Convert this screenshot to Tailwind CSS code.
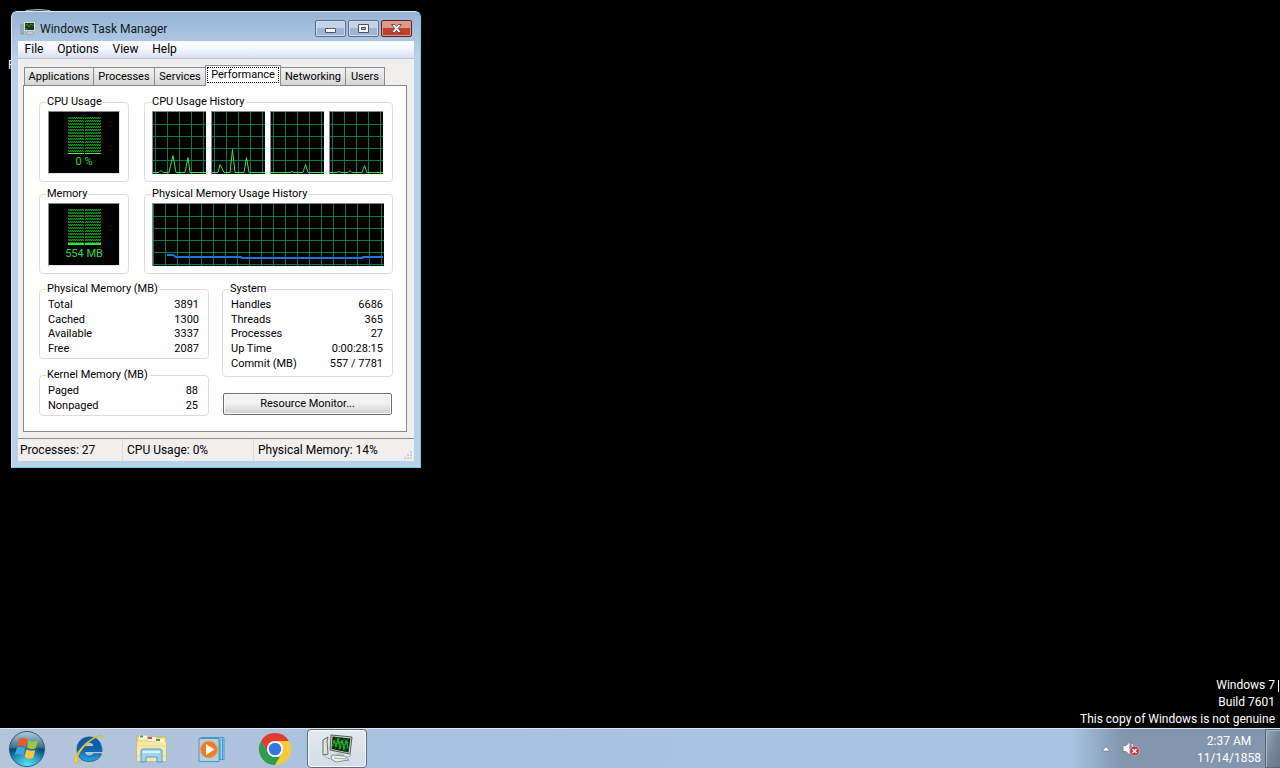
<!DOCTYPE html>
<html lang="en">
<head>
<meta charset="utf-8">
<meta name="viewport" content="width=device-width, initial-scale=1">
<title>Windows Task Manager</title>
<script src="https://cdn.jsdelivr.net/npm/@tailwindcss/browser@4"></script>
</head>
<body class="relative flex min-h-screen flex-col overflow-hidden bg-black font-[Roboto,sans-serif] text-xs text-black">

<main class="relative flex grow flex-col items-start">
  <!-- Desktop icon, mostly covered by the window -->
  <button aria-label="Recycle Bin" class="absolute top-[9px] left-[8px] flex flex-col items-start text-xs leading-4 text-white">
    <svg class="ml-[14px] h-12 w-8" viewBox="0 0 32 48" fill="none"><path d="M4 1.500Q16 -.5 28 1.500L25 44H8Z" fill="#333" stroke="#bbb"/></svg>
    <span class="w-[3px] overflow-hidden">R</span>
  </button>

  <!-- Task Manager window -->
  <section class="relative mt-[11px] ml-[11px] flex w-[410px] flex-col rounded-t-md border border-[#6fd3e6] border-t-[#dce9f5] border-l-[#cfe6f3] bg-linear-to-b from-[#98b4d3] via-[#b9d1ea] via-10% to-[#b9d1ea] px-[6px] pb-[6px]">
    <header class="flex h-[29px] items-start">
      <svg class="mt-[9px] ml-[2px] h-4 w-4 shrink-0" viewBox="0 0 16 16" fill="none">
        <path d="M1 3v10M1 4h3M1 13h3M3 4v9" stroke="#8a948c"/>
        <path d="M4 1h11v9H4z" fill="#d7ddd2"/><path d="M5 2h9v7H5z" fill="#173c1b"/>
        <path d="M5 5l2-2 2 3 2-3 3 2M5 8h3" stroke="#3d8a3f"/>
        <path d="M7 11h6l1 2H6z" fill="#e9ece5" stroke="#7c857c" stroke-width=".6"/>
      </svg>
      <h1 class="ml-1 pt-[8px] leading-[18px] text-[#101820]">Windows Task Manager</h1>
      <div class="mt-[8px] mr-[2px] ml-auto flex gap-[2px]">
        <button aria-label="Minimize" class="flex h-[17px] w-[31px] items-center justify-center rounded-xs border border-[#58708e] bg-linear-to-b from-[#c3d3e7] from-50% to-[#9fb5d0] to-50% shadow-[inset_0_0_0_1px_#cfddee]">
          <svg class="h-[13px] w-[13px]" viewBox="0 0 13 13"><path d="M1.500 6.500h10v4h-10z" fill="#fff" stroke="#4a5468"/></svg>
        </button>
        <button aria-label="Maximize" class="flex h-[17px] w-[31px] items-center justify-center rounded-xs border border-[#58708e] bg-linear-to-b from-[#c3d3e7] from-50% to-[#9fb5d0] to-50% shadow-[inset_0_0_0_1px_#cfddee]">
          <svg class="h-[13px] w-[13px]" viewBox="0 0 13 13"><path d="M1.500 2.500h10v8h-10zM4.500 5.500v2h4v-2z" fill="#fff" fill-rule="evenodd" stroke="#4a5468"/></svg>
        </button>
        <button aria-label="Close" class="flex h-[17px] w-[31px] items-center justify-center rounded-xs border border-[#5b1f20] bg-linear-to-b from-[#dd9a8d] from-50% to-[#c0402c] to-50% shadow-[inset_0_0_0_1px_#e09a8e]">
          <svg class="h-[13px] w-[13px]" viewBox="0 0 13 13"><path d="M1.500 2.500h3l2 2 2-2h3l-3.300 4 3.300 4h-3l-2-2-2 2h-3l3.300-4z" fill="#fff" stroke="#55454f" stroke-width=".9"/></svg>
        </button>
      </div>
    </header>

    <div class="flex flex-col bg-[#f1efee]">
      <nav class="flex h-[18px] items-center border-b border-[#b8c4dc] bg-linear-to-b from-[#f8faff] from-35% to-[#dbe0f1] leading-[17px]">
        <button class="w-[32px]">File</button>
        <button class="w-[56px]">Options</button>
        <button class="w-[39px]">View</button>
        <button class="w-[39px]">Help</button>
      </nav>

      <div class="pt-[6px] pr-[7px] pl-[6px] text-[11px] leading-[14px]">
        <div role="tablist" class="flex items-end">
          <button role="tab" class="h-[18px] w-[70px] border border-b-0 border-[#8c8c8c] bg-linear-to-b from-[#f2f2f2] to-[#d6d6d6]">Applications</button>
          <button role="tab" class="h-[18px] w-[61px] border border-b-0 border-l-0 border-[#8c8c8c] bg-linear-to-b from-[#f2f2f2] to-[#d6d6d6]">Processes</button>
          <button role="tab" class="h-[18px] w-[50px] border-t border-[#8c8c8c] bg-linear-to-b from-[#f2f2f2] to-[#d6d6d6]">Services</button>
          <button role="tab" aria-selected="true" class="relative z-10 -mb-px flex h-[21px] w-[76px] flex-col border border-b-0 border-[#8c8c8c] bg-white px-px pt-px"><span class="w-full border border-dotted border-black leading-[14px]">Performance</span></button>
          <button role="tab" class="h-[18px] w-[65px] border border-b-0 border-l-0 border-[#8c8c8c] bg-linear-to-b from-[#f2f2f2] to-[#d6d6d6]">Networking</button>
          <button role="tab" class="h-[18px] w-[39px] border border-b-0 border-l-0 border-[#8c8c8c] bg-linear-to-b from-[#f2f2f2] to-[#d6d6d6]">Users</button>
        </div>

        <div role="tabpanel" class="-ml-px flex flex-col border border-[#8c8788] bg-white pt-[9px] pr-[13px] pb-[15px] pl-[15px]">
          <svg class="h-0 w-0" aria-hidden="true">
            <defs>
              <pattern id="dots" width="2" height="3" patternUnits="userSpaceOnUse"><path d="M0 .5h1M1 1.500h1" stroke="#189428"/><path d="M1 .5h1M0 1.500h1" stroke="#0a4d12"/></pattern>
            </defs>
          </svg>
          <div class="mb-[5px] flex gap-[15px]">
            <fieldset class="h-[87px] w-[90px] rounded-sm border border-[#dcdcdc] px-[8px] pt-[2px]">
              <legend class="-ml-[2px] px-px">CPU Usage</legend>
              <div class="flex h-[63px] flex-col items-center border border-[#8a8a8a] border-r-[#e6e6e6] border-b-[#e6e6e6] bg-black">
                <svg class="mt-[5px] h-[38px] w-[33px] shrink-0" viewBox="0 0 33 38"><path d="M0 0h16v36H0zM17 0h16v36H17z" fill="url(#dots)"/><path d="M0 36.500h16M17 36.500h16" stroke="#4bea4f"/></svg>
                <span class="leading-[14px] text-[#3fd24a]">0 %</span>
              </div>
            </fieldset>
            <fieldset class="h-[87px] grow rounded-sm border border-[#dcdcdc] px-[7px] pt-[2px]">
              <legend class="-ml-px px-px">CPU Usage History</legend>
              <div class="flex gap-[5px]">
                <svg class="h-[63px] w-[54px]" viewBox="0 0 54 63" fill="none"><path d="M0 0h54v63H0z" fill="#000"/><path d="M3.500 1v62M15.500 1v62M27.500 1v62M39.500 1v62M51.500 1v62M0 13.500h54M0 25.500h54M0 37.500h54M0 49.500h54" stroke="#0a7a4c"/><path d="M0 .5h54M.5 0v63" stroke="#8a8a8a"/><path d="M1 61.500h6l2-2 2 2h6l4-17 3 17h9l3-15 2 15h16" stroke="#36e04a"/></svg>
                <svg class="h-[63px] w-[54px]" viewBox="0 0 54 63" fill="none"><path d="M0 0h54v63H0z" fill="#000"/><path d="M3.500 1v62M15.500 1v62M27.500 1v62M39.500 1v62M51.500 1v62M0 13.500h54M0 25.500h54M0 37.500h54M0 49.500h54" stroke="#0a7a4c"/><path d="M0 .5h54M.5 0v63" stroke="#8a8a8a"/><path d="M1 61.500h6l2-8 4 8h6l2.500-23 2.500 23h9l2.500-15 2.500 15h16" stroke="#36e04a"/></svg>
                <svg class="h-[63px] w-[54px]" viewBox="0 0 54 63" fill="none"><path d="M0 0h54v63H0z" fill="#000"/><path d="M3.500 1v62M15.500 1v62M27.500 1v62M39.500 1v62M51.500 1v62M0 13.500h54M0 25.500h54M0 37.500h54M0 49.500h54" stroke="#0a7a4c"/><path d="M0 .5h54M.5 0v63" stroke="#8a8a8a"/><path d="M1 61.500h19l2-1 2 1h9l2.500-8 2.500 8h16" stroke="#36e04a"/></svg>
                <svg class="h-[63px] w-[54px]" viewBox="0 0 54 63" fill="none"><path d="M0 0h54v63H0z" fill="#000"/><path d="M3.500 1v62M15.500 1v62M27.500 1v62M39.500 1v62M51.500 1v62M0 13.500h54M0 25.500h54M0 37.500h54M0 49.500h54" stroke="#0a7a4c"/><path d="M0 .5h54M.5 0v63" stroke="#8a8a8a"/><path d="M1 61.500h7l2-1 2 1h7l2-2 2 2h10l2.500-7 2.500 7h16" stroke="#36e04a"/></svg>
              </div>
            </fieldset>
          </div>

          <div class="mb-[8px] flex gap-[15px]">
            <fieldset class="h-[87px] w-[90px] rounded-sm border border-[#dcdcdc] px-[8px] pt-[2px]">
              <legend class="-ml-[2px] px-px">Memory</legend>
              <div class="flex h-[63px] flex-col items-center border border-[#8a8a8a] border-r-[#e6e6e6] border-b-[#e6e6e6] bg-black">
                <svg class="mt-[5px] h-[38px] w-[33px] shrink-0" viewBox="0 0 33 38"><path d="M0 0h16v34H0zM17 0h16v34H17z" fill="url(#dots)"/><path d="M0 35h16M17 35h16" stroke="#36e03c" stroke-width="2"/></svg>
                <span class="leading-[14px] text-[#3fd24a]">554 MB</span>
              </div>
            </fieldset>
            <fieldset class="h-[87px] grow rounded-sm border border-[#dcdcdc] px-[7px] pt-[2px]">
              <legend class="-ml-px px-px">Physical Memory Usage History</legend>
              <svg class="h-[63px] w-[232px]" viewBox="0 0 232 63" fill="none">
                <path d="M0 0h232v63H0z" fill="#000"/>
                <path d="M1.500 1v62M13.500 1v62M25.500 1v62M37.500 1v62M49.500 1v62M61.500 1v62M73.500 1v62M85.500 1v62M97.500 1v62M109.500 1v62M121.500 1v62M133.500 1v62M145.500 1v62M157.500 1v62M169.500 1v62M181.500 1v62M193.500 1v62M205.500 1v62M217.500 1v62M229.500 1v62M0 13.500h232M0 25.500h232M0 37.500h232M0 49.500h232M0 61.500h232" stroke="#0a7a4c"/>
                <path d="M0 .5h232M.5 0v63" stroke="#8a8a8a"/>
                <path d="M15 52h6l3 2h65l1 1h120l1-1h20" stroke="#1f74e0" stroke-width="2"/>
              </svg>
            </fieldset>
          </div>

          <div class="flex gap-[13px]">
            <div class="flex w-[170px] flex-col gap-[9px]">
              <fieldset class="h-[77px] rounded-sm border border-[#dcdcdc] px-[8px] pt-[2px]">
                <legend class="-ml-[2px] px-px">Physical Memory (MB)</legend>
                <table class="h-[58px] w-full">
                  <tbody>
                    <tr><th scope="row" class="p-0 text-left font-normal">Total</th><td class="p-0 pr-px text-right">3891</td></tr>
                    <tr><th scope="row" class="p-0 text-left font-normal">Cached</th><td class="p-0 pr-px text-right">1300</td></tr>
                    <tr><th scope="row" class="p-0 text-left font-normal">Available</th><td class="p-0 pr-px text-right">3337</td></tr>
                    <tr><th scope="row" class="p-0 text-left font-normal">Free</th><td class="p-0 pr-px text-right">2087</td></tr>
                  </tbody>
                </table>
              </fieldset>
              <fieldset class="h-[48px] rounded-sm border border-[#dcdcdc] px-[8px] pt-[2px]">
                <legend class="-ml-[2px] px-px">Kernel Memory (MB)</legend>
                <table class="h-[29px] w-full">
                  <tbody>
                    <tr><th scope="row" class="p-0 text-left font-normal">Paged</th><td class="p-0 pr-[2px] text-right">88</td></tr>
                    <tr><th scope="row" class="p-0 text-left font-normal">Nonpaged</th><td class="p-0 pr-[2px] text-right">25</td></tr>
                  </tbody>
                </table>
              </fieldset>
            </div>
            <div class="flex grow flex-col gap-[16px]">
              <fieldset class="h-[95px] rounded-sm border border-[#dcdcdc] px-[8px] pt-[2px]">
                <legend class="-ml-[2px] px-px">System</legend>
                <table class="h-[73px] w-full">
                  <tbody>
                    <tr><th scope="row" class="p-0 text-left font-normal">Handles</th><td class="p-0 pr-px text-right">6686</td></tr>
                    <tr><th scope="row" class="p-0 text-left font-normal">Threads</th><td class="p-0 pr-px text-right">365</td></tr>
                    <tr><th scope="row" class="p-0 text-left font-normal">Processes</th><td class="p-0 pr-px text-right">27</td></tr>
                    <tr><th scope="row" class="p-0 text-left font-normal">Up Time</th><td class="p-0 pr-px text-right">0:00:28:15</td></tr>
                    <tr><th scope="row" class="p-0 text-left font-normal">Commit (MB)</th><td class="p-0 pr-px text-right">557 / 7781</td></tr>
                  </tbody>
                </table>
              </fieldset>
              <button class="mx-px h-[22px] rounded-xs border border-[#707070] bg-linear-to-b from-[#f2f2f2] from-45% to-[#cfcfcf] shadow-[inset_0_0_0_1px_#fbfbfb]">Resource Monitor...</button>
            </div>
          </div>
        </div>
      </div>

      <footer class="mt-[6px] flex h-[23px] items-stretch border-t border-[#8f8d8d] leading-[23px]">
        <span class="w-[105px] border-r border-[#dcd9d8] pl-[2px]">Processes: 27</span>
        <span class="w-[131px] border-r border-[#dcd9d8] pl-[4px]">CPU Usage: 0%</span>
        <span class="grow pl-[4px]">Physical Memory: 14%</span>
        <svg class="mr-px h-[10px] w-[10px] self-end" viewBox="0 0 10 10"><path d="M7 0h2v2H7zM4 3h2v2H4zM7 3h2v2H7zM1 6h2v2H1zM4 6h2v2H4zM7 6h2v2H7z" fill="#d3cecb"/></svg>
      </footer>
    </div>
  </section>

  <!-- Build watermark -->
  <div class="mt-auto ml-auto flex items-start pr-px">
    <p class="pr-[3px] text-right leading-[17px] text-white">Windows 7<br>Build 7601<br>This copy of Windows is not genuine</p>
    <i class="mt-[3px] h-3 w-px bg-white"></i>
  </div>
</main>

<!-- Taskbar -->
<footer class="flex h-10 shrink-0 items-stretch border-t border-[#dce6f0] bg-linear-to-r from-[#b4c4d9] via-[#a9c1de] via-30% to-[#aac5e2]">
  <button aria-label="Start" class="flex w-[53px] items-center justify-center">
    <svg class="h-[38px] w-[38px]" viewBox="0 0 38 38">
      <defs>
        <linearGradient id="orbTop" x1="0" y1="0" x2="0" y2="1"><stop offset="0" stop-color="#b6cbd9"/><stop offset=".45" stop-color="#43718f"/><stop offset=".5" stop-color="#0b4a7d"/><stop offset="1" stop-color="#1691bd"/></linearGradient>
        <radialGradient id="orbGlow" cx=".5" cy="1" r=".6"><stop offset="0" stop-color="#56e2ee"/><stop offset="1" stop-color="#56e2ee" stop-opacity="0"/></radialGradient>
      </defs>
      <circle cx="19" cy="19" r="17.500" fill="url(#orbTop)" stroke="#245a83"/><circle cx="19" cy="19" r="17" fill="url(#orbGlow)"/>
      <path d="M11.500 8.500q4-2 8 1l-1.800 7.500q-4-2.800-8.300-1z" fill="#e8592b"/>
      <path d="M20.800 10.200q4 2.400 9 .2l-2.200 8q-4.400 2-8.600-.8z" fill="#9cc93b"/>
      <path d="M9 17.500q4.300-2 8.300 1l-1.900 7.300q-4-2.800-8.400-1z" fill="#42a5dd"/>
      <path d="M18.500 19.200q4.300 2.500 8.700.8l-2 7.800q-4.400 2-8.600-.8z" fill="#fbc839"/>
    </svg>
  </button>
  <button aria-label="Internet Explorer" class="ml-[6px] flex w-[61px] items-center justify-center pr-[3px]">
    <svg class="h-8 w-8" viewBox="0 0 32 32" fill="none">
      <defs><linearGradient id="ie" x1="0" y1="0" x2="0" y2="1"><stop offset="0" stop-color="#0b5aa2"/><stop offset=".5" stop-color="#0c62ae"/><stop offset="1" stop-color="#27a8e4"/></linearGradient></defs>
      <path d="M30 18.500H12.500c.3 3 2 4.500 4.700 4.500 2 0 3.400-.8 4.200-2.200h8C28 25.500 23.500 28.500 17 28.500c-7.500 0-12-4.500-12-12s5-12.500 12.500-12.500S30 9 30 18.500zM22 13.500c-.3-2.600-2-4-4.600-4s-4.300 1.500-4.700 4z" fill="url(#ie)" fill-rule="evenodd" stroke="#0d4b83" stroke-width=".7"/>
      <path d="M31 5.500c.5-6-9-2.500-17 4.500S-.5 28 3.200 29.500c1.500.6 3.500-.4 5.800-2-2.500 1-4 .8-3.800-1.200C5.500 22 11 14 18 8.500 23.500 4 29 2 31 5.500z" fill="#f5d13b" stroke="#cba42a" stroke-width=".5"/>
    </svg>
  </button>
  <button aria-label="Windows Explorer" class="flex w-[61px] items-center justify-center pl-[2px]">
    <svg class="h-8 w-8" viewBox="0 0 32 32">
      <path d="M1 3h9l1 2h5l1-1h13v24H1z" fill="#f1dc8b" stroke="#c9a84e" stroke-width=".7"/>
      <path d="M3 2.500h8v4H3zM12 4h8v4h-8zM20 6h8v3h-8z" fill="#fbf7e1"/>
      <path d="M4 2.500h3v2H4z" fill="#45a650"/><path d="M12 4h4v2h-4z" fill="#d8533f"/><path d="M20 6h4v2h-4z" fill="#459d55"/>
      <path d="M1 9h29v19H1z" fill="#f8eaa6"/><path d="M1 13h29M1 23h29" stroke="#ecd98a"/>
      <path d="M5 18q0-2 2-2h17q2 0 2 2v11h-5v-5H10v5H5z" fill="#9ed5ee" stroke="#4c9bc6"/>
      <path d="M7 18h17v2H7z" fill="#d8f2fb"/>
    </svg>
  </button>
  <button aria-label="Windows Media Player" class="flex w-[61px] items-center justify-center">
    <svg class="h-8 w-8" viewBox="0 0 32 32" fill="none">
      <path d="M5 4.500h23v22H5z" fill="#c3d8ea" stroke="#4d9ac4"/><path d="M24 5.500v21M26.500 5v22" stroke="#2f9fdc" stroke-width="1.300"/>
      <path d="M3 5.500h20v23H3z" fill="#b4d0e4" stroke="#4d93bd"/>
      <circle cx="13" cy="16.500" r="8.500" fill="#ee7d22" stroke="#e6a070"/><path d="M10 11l8.500 5.500L10 22z" fill="#fff"/>
    </svg>
  </button>
  <button aria-label="Google Chrome" class="flex w-[63px] items-center justify-center pl-[2px]">
    <svg class="h-8 w-8" viewBox="0 0 32 32">
      <path d="M2.140 8A16 16 0 0 1 29.860 8H16L9.070 20z" fill="#df3b2f"/>
      <path d="M29.860 8A16 16 0 0 1 16 32L22.930 20 16 8z" fill="#fbc934"/>
      <path d="M16 32A16 16 0 0 1 2.140 8L9.070 20Q12 24 16 24h4.600z" fill="#2f9d4e"/>
      <circle cx="16" cy="16" r="8" fill="#fff"/><circle cx="16" cy="16" r="6.300" fill="#3577e8"/>
    </svg>
  </button>
  <button aria-label="Windows Task Manager" class="ml-[2px] flex w-[60px] items-center justify-center rounded-sm border border-[#5e6f85] bg-linear-to-b from-[#e2e8f0] to-[#d3dde9] shadow-[inset_0_0_0_1px_#f8fbff]">
    <svg class="h-8 w-8" viewBox="0 0 32 32" fill="none">
      <path d="M2 7l5-3-1 4 1 13-5 1z" fill="#e3e5e0" stroke="#656a66"/>
      <path d="M10 2l21 2-2 17-20-4z" fill="#d8d6c6" stroke="#595d54"/>
      <path d="M11.500 3.500l18 2-2 14-17-3.500z" fill="#082e0c"/>
      <path d="M15 4l-1 13M19 5l-1 13M23 5l-1 13M27 6l-2 13M11 8l18 2M11 12l17 3" stroke="#176b24" stroke-width=".8"/>
      <path d="M11 14l2-7 2 7 2-9 2 11 2-9 2 10 2-10 2 8M12 9l4 2 4-2 3 3 4-3" stroke="#2fa83e"/>
      <path d="M16 20l7 1v3l-8-1z" fill="#b8bcb7"/><path d="M11 22l12 1 5 4-13 2-5-3z" fill="#edf0ed" stroke="#8a918c"/>
      <path d="M3 22q3 5 8 3M25 24q7 0 4-4M13 25l12 1" stroke="#a3aaa5"/>
    </svg>
  </button>
  <div class="ml-auto flex items-stretch bg-linear-to-r from-[#a9c4e1] to-[#8296ad] to-25%">
    <button aria-label="Show hidden icons" class="ml-[20px] flex w-[32px] items-center justify-center">
      <svg class="h-[6px] w-[10px]" viewBox="0 0 10 6"><path d="M5 .8L9 5H1z" fill="#fff" stroke="#5c6c80" stroke-width=".6"/></svg>
    </button>
    <button aria-label="Speakers: muted" class="flex w-[18px] items-center justify-center">
      <svg class="h-[17px] w-[18px]" viewBox="0 0 18 17"><path d="M1 5.500h3l4-4v14l-4-4H1z" fill="#f4f6f9" stroke="#5b6a7c" stroke-width=".7"/><path d="M10 4q2 4 0 9" fill="none" stroke="#fff"/><circle cx="12.500" cy="11" r="4.700" fill="#cf3038" stroke="#f0c7c9" stroke-width=".6"/><path d="M10.500 9l4 4M14.500 9l-4 4" stroke="#fff" stroke-width="1.500"/></svg>
    </button>
    <button class="mr-[4px] ml-[57px] w-[64px] pt-[2px] text-center leading-[17px] whitespace-nowrap text-white">2:37 AM<br>11/14/1858</button>
    <button aria-label="Show desktop" class="w-[15px] border border-r-0 border-[#5a6778] bg-linear-to-br from-[#9aa9ba] via-[#76879b] via-50% to-[#65778d] shadow-[inset_1px_1px_0_#a8b7c8]"></button>
  </div>
</footer>
</body>
</html>
